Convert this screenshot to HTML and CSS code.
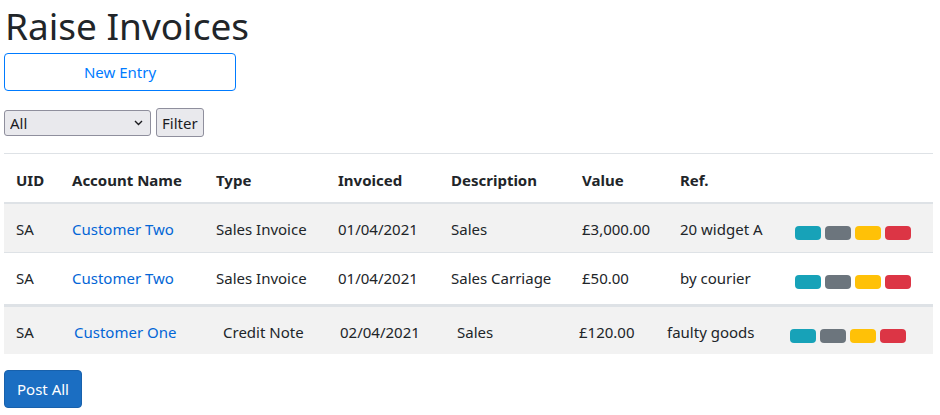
FILE: index.html
```html
<!DOCTYPE html>
<html lang="en">
<head>
<meta charset="utf-8">
<title>Raise Invoices</title>
<link rel="stylesheet" href="styles.css">
</head>
<body>
<main class="page">
  <h1 class="title">Raise Invoices</h1>
  <button class="btn-outline" type="button">New Entry</button>
  <div class="filter-row">
    <span class="select-wrap">
      <select class="select">
        <option>All</option>
      </select>
      <svg class="chevron" width="9" height="6" viewBox="0 0 9 6"><path d="M1 1l3.5 3.5L8 1" fill="none" stroke="#1b1b1f" stroke-width="1.4"/></svg>
    </span>
    <button class="btn-plain" type="button">Filter</button>
  </div>

  <table class="grid grid-one">
    <colgroup>
      <col class="c1"><col class="c2"><col class="c3"><col class="c4"><col class="c5"><col class="c6"><col class="c7"><col class="c8">
    </colgroup>
    <thead>
      <tr>
        <th>UID</th><th>Account Name</th><th>Type</th><th>Invoiced</th><th>Description</th><th>Value</th><th>Ref.</th><th></th>
      </tr>
    </thead>
    <tbody>
      <tr class="striped">
        <td>SA</td><td><a href="#">Customer Two</a></td><td>Sales Invoice</td><td>01/04/2021</td><td>Sales</td><td>£3,000.00</td><td>20 widget A</td>
        <td><span class="badges"><span class="badge info"></span><span class="badge secondary"></span><span class="badge warning"></span><span class="badge danger"></span></span></td>
      </tr>
      <tr class="last">
        <td>SA</td><td><a href="#">Customer Two</a></td><td>Sales Invoice</td><td>01/04/2021</td><td>Sales Carriage</td><td>£50.00</td><td>by courier</td>
        <td><span class="badges"><span class="badge info"></span><span class="badge secondary"></span><span class="badge warning"></span><span class="badge danger"></span></span></td>
      </tr>
    </tbody>
  </table>

  <table class="grid grid-two">
    <colgroup>
      <col class="d1"><col class="d2"><col class="d3"><col class="d4"><col class="d5"><col class="d6"><col class="d7"><col class="d8">
    </colgroup>
    <tbody>
      <tr class="striped">
        <td>SA</td><td><a href="#">Customer One</a></td><td>Credit Note</td><td>02/04/2021</td><td>Sales</td><td>£120.00</td><td>faulty goods</td>
        <td><span class="badges"><span class="badge info"></span><span class="badge secondary"></span><span class="badge warning"></span><span class="badge danger"></span></span></td>
      </tr>
    </tbody>
  </table>

  <button class="btn-primary" type="button">Post All</button>
</main>
</body>
</html>
```

FILE: styles.css
```css
html, body {
  margin: 0;
  padding: 0;
  background: #fff;
}

body {
  font-family: "Noto Sans", "Open Sans", sans-serif;
  font-size: 15px;
  line-height: 24px;
  color: #212529;
}

.page {
  padding: 0 7px 0 4px;
}

.title {
  margin: 0 0 5px 1px;
  padding-top: 3px;
  font-size: 37px;
  font-weight: 400;
  line-height: 45px;
  color: #212529;
}

.btn-outline {
  display: block;
  width: 232px;
  height: 38px;
  padding: 0;
  border: 1px solid #007bff;
  border-radius: 4px;
  background: #fff;
  color: #007bff;
  font: inherit;
  cursor: pointer;
}

.filter-row {
  display: flex;
  align-items: center;
  gap: 5px;
  margin-top: 16px;
  height: 31px;
}

.select-wrap {
  position: relative;
  display: inline-block;
}

.select {
  appearance: none;
  -webkit-appearance: none;
  width: 147px;
  height: 26px;
  padding: 0 0 0 5px;
  border: 1px solid #8f8f9d;
  border-radius: 3px;
  background: #e9e9ed;
  color: #1b1b1f;
  font: inherit;
  line-height: 24px;
  display: block;
}

.chevron {
  position: absolute;
  right: 8px;
  top: 10px;
  pointer-events: none;
}

.btn-plain {
  height: 29px;
  padding: 0 5px;
  border: 1px solid #8f8f9d;
  border-radius: 3px;
  background: #e9e9ed;
  color: #1b1b1f;
  font: inherit;
  line-height: 24px;
}

.grid {
  width: 929px;
  border-collapse: collapse;
  table-layout: fixed;
}

.grid-one {
  margin-top: 15px;
}

.grid th,
.grid td {
  padding: 13px 12px 11px;
  text-align: left;
  vertical-align: top;
  border-top: 1px solid #dee2e6;
  white-space: nowrap;
}

.grid thead th {
  padding: 14px 12px 10px;
  font-weight: 700;
  border-bottom: 2px solid #dee2e6;
  vertical-align: bottom;
}

.grid .last td {
  padding-bottom: 14px;
}

.grid-two td {
  border-top: 3px solid #dee2e6;
  padding: 13px 12px 10px;
}

.striped td {
  background: #f2f2f2;
}

.grid a {
  color: #0366d6;
  text-decoration: none;
}

.c1 { width: 56px; }
.c2 { width: 144px; }
.c3 { width: 122px; }
.c4 { width: 113px; }
.c5 { width: 131px; }
.c6 { width: 98px; }
.c7 { width: 115px; }
.c8 { width: 150px; }

.d1 { width: 58px; }
.d2 { width: 149px; }
.d3 { width: 117px; }
.d4 { width: 117px; }
.d5 { width: 122px; }
.d6 { width: 88px; }
.d7 { width: 123px; }
.d8 { width: 155px; }

.badges {
  display: inline-flex;
  gap: 4px;
  vertical-align: -5px;
}

.badge {
  display: inline-block;
  width: 26px;
  height: 14px;
  border-radius: 4px;
}

.info { background: #17a2b8; }
.secondary { background: #6c757d; }
.warning { background: #ffc107; }
.danger { background: #dc3545; }

.btn-primary {
  display: block;
  margin-top: 16px;
  height: 38px;
  padding: 0 12px;
  border: 1px solid #1861ac;
  border-radius: 4px;
  background: #1b6ec2;
  color: #fff;
  font: inherit;
}
```
